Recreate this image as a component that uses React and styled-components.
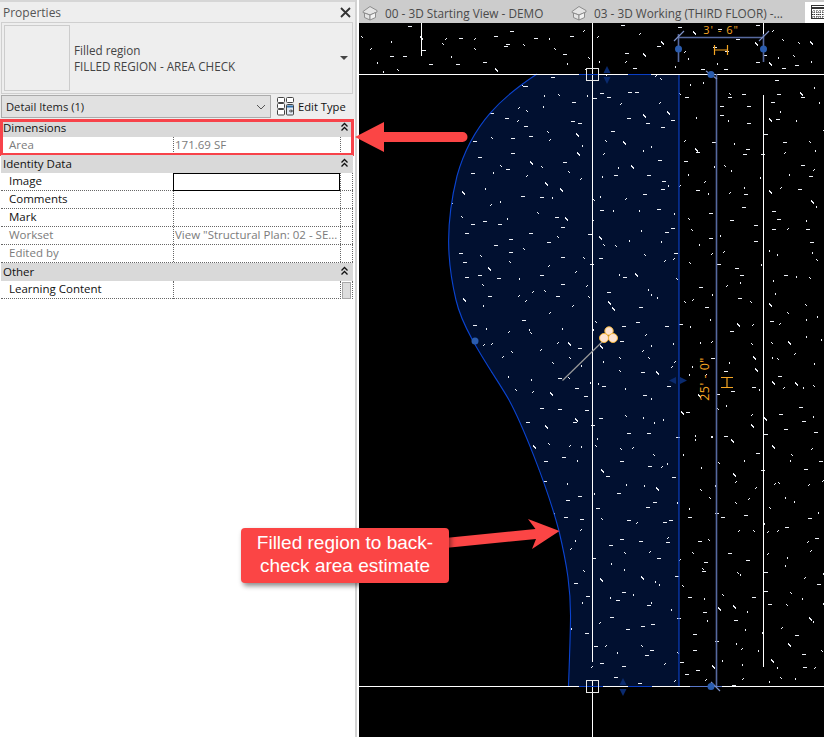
import React from 'react';
import styled, { createGlobalStyle } from 'styled-components';

const GlobalStyle = createGlobalStyle`
  html, body {
    margin: 0;
    padding: 0;
    background: #ffffff;
  }
`;

// seeded so the speckle stays put between runs
const makeSpeckle = () => {
  let seed = 4711;
  const rnd = () => {
    seed = (seed * 16807) % 2147483647;
    return seed / 2147483647;
  };
  let d = '';
  for (let y = 24; y < 690; y += 18) {
    for (let x = 360; x < 824; x += 18) {
      const px = Math.round(x + rnd() * 18) + 0.5;
      const py = Math.round(y + rnd() * 18) + 0.5;
      const kind = rnd();
      if (kind < 0.36) d += `M${px} ${py}h4`;
      else if (kind < 0.62) d += `M${px} ${py}v2`;
      else if (kind < 0.76) d += `M${px} ${py}l2 2`;
      else if (kind < 0.92) d += `M${px} ${py}l2 -2`;
      else d += `M${px} ${py}l1 2l2 1`;
    }
  }
  return d;
};

const speckle = makeSpeckle();

const EDGE =
  'M537 74C505 95 472 122 457 176C445 225 447 262 456 300C464 335 497 378 509 400C521 422 546 482 559 531C567 565 571 590 570.5 620C570 650 569 670 568.5 686';
const BOUNDARY = `${EDGE}L679 686L679 74Z`;

const Page = styled.div`
  position: relative;
  display: flex;
  width: 824px;
  height: 737px;
  overflow: hidden;
  font-family: 'Open Sans', 'Liberation Sans', sans-serif;
  font-size: 11.5px;
`;

const Panel = styled.aside`
  display: flex;
  flex-direction: column;
  width: 355px;
  flex: none;
  box-sizing: border-box;
  padding-left: 1px;
  background: #ffffff;
`;

const PanelTop = styled.div`
  margin-left: -1px;
  padding-left: 1px;
  background: #eeeeee;
  border-top: 2px solid #d6d6d6;
`;

const TitleBar = styled.div`
  display: flex;
  align-items: center;
  justify-content: space-between;
  height: 20px;
  padding: 1px 4px 0 2px;
  box-sizing: border-box;
  color: #555555;
  font-size: 12px;
`;

const TypeBox = styled.div`
  display: flex;
  align-items: center;
  gap: 4px;
  box-sizing: border-box;
  width: 352px;
  height: 72px;
  padding: 2px;
  border: 1px solid #cfcfcf;
`;

const Thumb = styled.div`
  width: 64px;
  height: 64px;
  flex: none;
  border: 1px solid #cccccc;
`;

const TypeName = styled.div`
  flex: 1;
  color: #444444;
  font-size: 11.7px;
  line-height: 16px;
`;

const Caret = styled.span`
  width: 0;
  height: 0;
  margin-right: 2px;
  border-left: 4px solid transparent;
  border-right: 4px solid transparent;
  border-top: 4px solid #444444;
`;

const SelectorRow = styled.div`
  display: flex;
  align-items: center;
  height: 25px;
  font-size: 11.2px;
`;

const Selector = styled.div`
  display: flex;
  align-items: center;
  justify-content: space-between;
  box-sizing: border-box;
  width: 270px;
  height: 23px;
  padding: 0 4px;
  background: #e1e1e1;
  border: 1px solid #ababab;
  color: #222222;
`;

const EditType = styled.div`
  display: flex;
  align-items: center;
  gap: 4px;
  margin-left: 6px;
  color: #111111;
`;

const Section = styled.section`
  position: relative;
  width: 352px;

  ${(props) =>
    props.$flagged &&
    `
    &::after {
      content: '';
      position: absolute;
      inset: 0 -1px -1px -1px;
      border: 3px solid #f7434a;
    }
  `}
`;

const SectionHead = styled.div`
  display: flex;
  align-items: center;
  justify-content: space-between;
  box-sizing: border-box;
  height: 18px;
  padding: 0 4px 2px 2px;
  background: #d9d9d9;
  color: #111111;
`;

const Row = styled.div`
  display: grid;
  grid-template-columns: 172px 167px 13px;
  height: 18px;
  box-sizing: border-box;
  border-bottom: 1px dotted #666666;
  color: ${(props) => (props.$muted ? '#7b7b7b' : '#111111')};
  background: #ffffff;
`;

const Label = styled.div`
  padding-left: 8px;
  line-height: 16px;
`;

const Value = styled.div`
  box-sizing: border-box;
  padding-left: 1px;
  line-height: 16px;
  white-space: nowrap;
  overflow: hidden;
  border-left: 1px dotted #666666;
  ${(props) => props.$active && 'border: 1px solid #000000; margin-bottom: -1px;'}
`;

const Tail = styled.div`
  border-left: 1px dotted #666666;
  border-right: 1px dotted #666666;
  padding: 1px 1px 0 1px;
`;

const MiniButton = styled.div`
  height: 15px;
  background: #dddddd;
  border: 1px solid #a8a8a8;
`;

const Splitter = styled.div`
  width: 4px;
  flex: none;
  box-sizing: border-box;
  border-left: 2px solid #d2d2d2;
`;

const Main = styled.main`
  display: flex;
  flex-direction: column;
  flex: 1;
  min-width: 0;
`;

const TabStrip = styled.div`
  display: flex;
  height: 23px;
  background: #cccccc;
  color: #4a4a4a;
  font-size: 11.8px;
`;

const Tab = styled.div`
  display: flex;
  align-items: center;
  gap: 7px;
  width: ${(props) => props.$width}px;
  flex: none;
  padding: 2px 0 0 ${(props) => props.$pad}px;
  box-sizing: border-box;
  white-space: nowrap;
`;

const ActiveTab = styled.div`
  display: flex;
  align-items: center;
  flex: 1;
  margin-top: 2px;
  padding-left: 6px;
  background: #ffffff;
`;

const Canvas = styled.svg`
  display: block;
  flex: 1;
  width: 465px;
  height: 714px;
  background: #000000;
`;

const Overlay = styled.svg`
  position: absolute;
  top: 0;
  left: 0;
  width: 824px;
  height: 737px;
  pointer-events: none;
`;

const Callout = styled.div`
  position: absolute;
  left: 241px;
  top: 528px;
  width: 208px;
  height: 55px;
  box-sizing: border-box;
  padding-top: 3px;
  border-radius: 4px;
  background: #fb4545;
  box-shadow: 2px 3px 5px rgba(0, 0, 0, 0.45);
  color: #ffffff;
  font-family: 'Liberation Sans', Arial, sans-serif;
  font-size: 19px;
  line-height: 23px;
  text-align: center;
`;

const CloseIcon = () => (
  <svg width="11" height="11" viewBox="0 0 11 11">
    <path d="M1 1L10 10M10 1L1 10" stroke="#333333" strokeWidth="1.8" fill="none" />
  </svg>
);

const Collapse = () => (
  <svg width="9" height="10" viewBox="0 0 9 10">
    <path d="M1.5 4.5L4.5 1.5L7.5 4.5M1.5 8.5L4.5 5.5L7.5 8.5" stroke="#111111" strokeWidth="1.3" fill="none" />
  </svg>
);

const Chevron = () => (
  <svg width="10" height="6" viewBox="0 0 10 6">
    <path d="M1 1L5 5L9 1" stroke="#555555" strokeWidth="1" fill="none" />
  </svg>
);

const EditTypeIcon = () => (
  <svg width="17" height="19" viewBox="0 0 17 19" fill="none" stroke="#444444">
    <rect x="0.5" y="0.5" width="7" height="5" rx="1" fill="#ffffff" />
    <rect x="9.5" y="0.5" width="7" height="5" rx="1" fill="#ffffff" />
    <rect x="0.5" y="6.5" width="7" height="5" rx="1" fill="#ffffff" />
    <rect x="0.5" y="12.5" width="7" height="5.5" rx="1" fill="#ffffff" />
    <rect x="9.5" y="7.5" width="7" height="10.5" rx="1" fill="#dfe8f2" />
    <path d="M10 9.5h6" stroke="#2f6ea8" strokeWidth="2" />
    <path d="M12 14h3M14 12.500l1.500 1.500l-1.500 1.500" stroke="#333333" />
  </svg>
);

const HouseIcon = () => (
  <svg width="16" height="16" viewBox="0 0 16 16" fill="#e4e4e4" stroke="#8c8c8c">
    <path d="M1 6.500L8 1.500L15 5.500L15 7L8 10L1 7.500Z" />
    <path d="M2.500 8L8 10L8 15L2.500 12.500Z" />
    <path d="M8 10L13.500 7.500L13.500 12.500L8 15Z" fill="#f2f2f2" />
  </svg>
);

const ScheduleIcon = () => (
  <svg width="14" height="15" viewBox="0 0 14 15" fill="none" stroke="#333333">
    <rect x="0.500" y="0.500" width="13" height="13" fill="#ffffff" />
    <path d="M0.500 3h13" strokeWidth="2" />
    <path d="M3 5v8M6 5v8M9 5v8M12 5v8M1 7h12M1 9.500h12M1 12h12" strokeDasharray="1 1" />
  </svg>
);

const Grip = ({ x, y, up }) => (
  <path d={up ? `M${x} ${y}l-3.500 7h7Z` : `M${x} ${y}l-3.500 -7h7Z`} fill="#0a2a6e" />
);

const DimStop = ({ x, y }) => <circle cx={x} cy={y} r="3.500" fill="#2a5cae" />;

const ModelView = () => (
  <Canvas viewBox="359 23 465 714">
    <defs>
      <clipPath id="speckled">
        <rect x="359" y="23" width="465" height="51" />
        <rect x="679" y="74" width="145" height="612" />
        <path d={BOUNDARY} />
      </clipPath>
    </defs>

    <path d={BOUNDARY} fill="#011030" />
    <path
      d={speckle}
      clipPath="url(#speckled)"
      stroke="#eef1f7"
      strokeWidth="1"
      fill="none"
      shapeRendering="crispEdges"
    />

    <path d={`${EDGE}M679 686L679 74`} stroke="#0b44d0" strokeWidth="1.100" fill="none" />

    <path
      d="M359 74.500H824M359 686.500H824M592.500 23V662M592.500 680V737M421.500 23V56M763.500 95V667M763.500 23V35"
      stroke="#ffffff"
      strokeWidth="1"
      shapeRendering="crispEdges"
    />
    <path
      d="M579 74.500H598M628 74.500H651M579 686.500H603M628 686.500H652"
      stroke="#0b3fc4"
      strokeWidth="1"
      shapeRendering="crispEdges"
    />
    <path d="M690 686.500H722" stroke="#5a78c8" strokeWidth="1" shapeRendering="crispEdges" />

    <rect x="586.500" y="68.500" width="12" height="12" fill="none" stroke="#e8e8e8" />
    <rect x="586.500" y="680.500" width="12" height="12" fill="none" stroke="#e8e8e8" />
    <Grip x={607} y={66} up />
    <Grip x={607} y={84} />
    <Grip x={623} y={678} up />
    <Grip x={623} y={696} />
    <path d="M669 380.500l7 -3.500v7ZM687 380.500l-7 -3.500v7Z" fill="#0a2a6e" />

    <path
      d="M678.500 34V62M763.500 34V62M678 37.500H763M716.500 74V686"
      stroke="#56699f"
      strokeWidth="1.600"
      fill="none"
    />
    <path
      d="M674 41L684 31M759 41L769 31M706 71L717 79M711 682L720 691"
      stroke="#7f92c8"
      strokeWidth="1.200"
      fill="none"
    />
    <DimStop x={678.500} y={49} />
    <DimStop x={763.500} y={49} />
    <DimStop x={711} y={74.500} />
    <DimStop x={711} y={686.500} />
    <circle cx={475} cy={341} r="3.500" fill="#2a5cae" />

    <text
      x="721"
      y="34"
      fill="#f5a623"
      fontSize="11"
      letterSpacing="1"
      textAnchor="middle"
      fontFamily="'Open Sans', sans-serif"
    >
      3' - 6"
    </text>
    <path d="M714.500 45V55M727.500 45V55M714.500 50H727.500" stroke="#f5a623" strokeWidth="1.200" fill="none" />
    <text
      x="709"
      y="379"
      fill="#f5a623"
      fontSize="12.500"
      letterSpacing="0.500"
      textAnchor="middle"
      transform="rotate(-90 709 379)"
      fontFamily="'Open Sans', sans-serif"
    >
      25' - 0"
    </text>
    <path d="M721 377.500H733M721 387.500H733M727 377.500V387.500" stroke="#f5a623" strokeWidth="1.200" fill="none" />

    <path d="M562.500 380.500L602 342" stroke="#9a9a9a" strokeWidth="1.200" />
    <g stroke="#f5b53a" strokeWidth="1" fill="#fde3d2">
      <circle cx="609" cy="331" r="4.200" />
      <circle cx="604" cy="338" r="4.500" />
      <circle cx="613" cy="338" r="4.500" />
    </g>
  </Canvas>
);

const Arrows = () => (
  <Overlay viewBox="0 0 824 737">
    <path d="M355 137L384 122V132H462.500A5 5 0 0 1 462.500 142H384V152Z" fill="#fb4545" />
    <path d="M445 538L535.500 529L528 519L559.500 531L532 549L536 539L445 548Z" fill="#fb4545" />
  </Overlay>
);

const App = () => (
  <>
    <GlobalStyle />
    <Page>
      <Panel>
        <PanelTop>
          <TitleBar>
            Properties
            <CloseIcon />
          </TitleBar>
          <TypeBox>
            <Thumb />
            <TypeName>
              Filled region
              <br />
              FILLED REGION - AREA CHECK
            </TypeName>
            <Caret />
          </TypeBox>
          <SelectorRow>
            <Selector>
              Detail Items (1)
              <Chevron />
            </Selector>
            <EditType>
              <EditTypeIcon />
              Edit Type
            </EditType>
          </SelectorRow>
        </PanelTop>

        <Section $flagged>
          <SectionHead>
            Dimensions
            <Collapse />
          </SectionHead>
          <Row $muted>
            <Label>Area</Label>
            <Value>171.69 SF</Value>
            <Tail />
          </Row>
        </Section>

        <Section>
          <SectionHead>
            Identity Data
            <Collapse />
          </SectionHead>
          <Row>
            <Label>Image</Label>
            <Value $active />
            <Tail />
          </Row>
          <Row>
            <Label>Comments</Label>
            <Value />
            <Tail />
          </Row>
          <Row>
            <Label>Mark</Label>
            <Value />
            <Tail />
          </Row>
          <Row $muted>
            <Label>Workset</Label>
            <Value>View "Structural Plan: 02 - SE...</Value>
            <Tail />
          </Row>
          <Row $muted>
            <Label>Edited by</Label>
            <Value />
            <Tail />
          </Row>
        </Section>

        <Section>
          <SectionHead>
            Other
            <Collapse />
          </SectionHead>
          <Row>
            <Label>Learning Content</Label>
            <Value />
            <Tail>
              <MiniButton />
            </Tail>
          </Row>
        </Section>
      </Panel>

      <Splitter />

      <Main>
        <TabStrip>
          <Tab $width={212} $pad={3}>
            <HouseIcon />
            00 - 3D Starting View - DEMO
          </Tab>
          <Tab $width={234} $pad={0}>
            <HouseIcon />
            03 - 3D Working (THIRD FLOOR) -...
          </Tab>
          <ActiveTab>
            <ScheduleIcon />
          </ActiveTab>
        </TabStrip>
        <ModelView />
      </Main>

      <Arrows />
      <Callout>
        Filled region to back-
        <br />
        check area estimate
      </Callout>
    </Page>
  </>
);

export default App;
